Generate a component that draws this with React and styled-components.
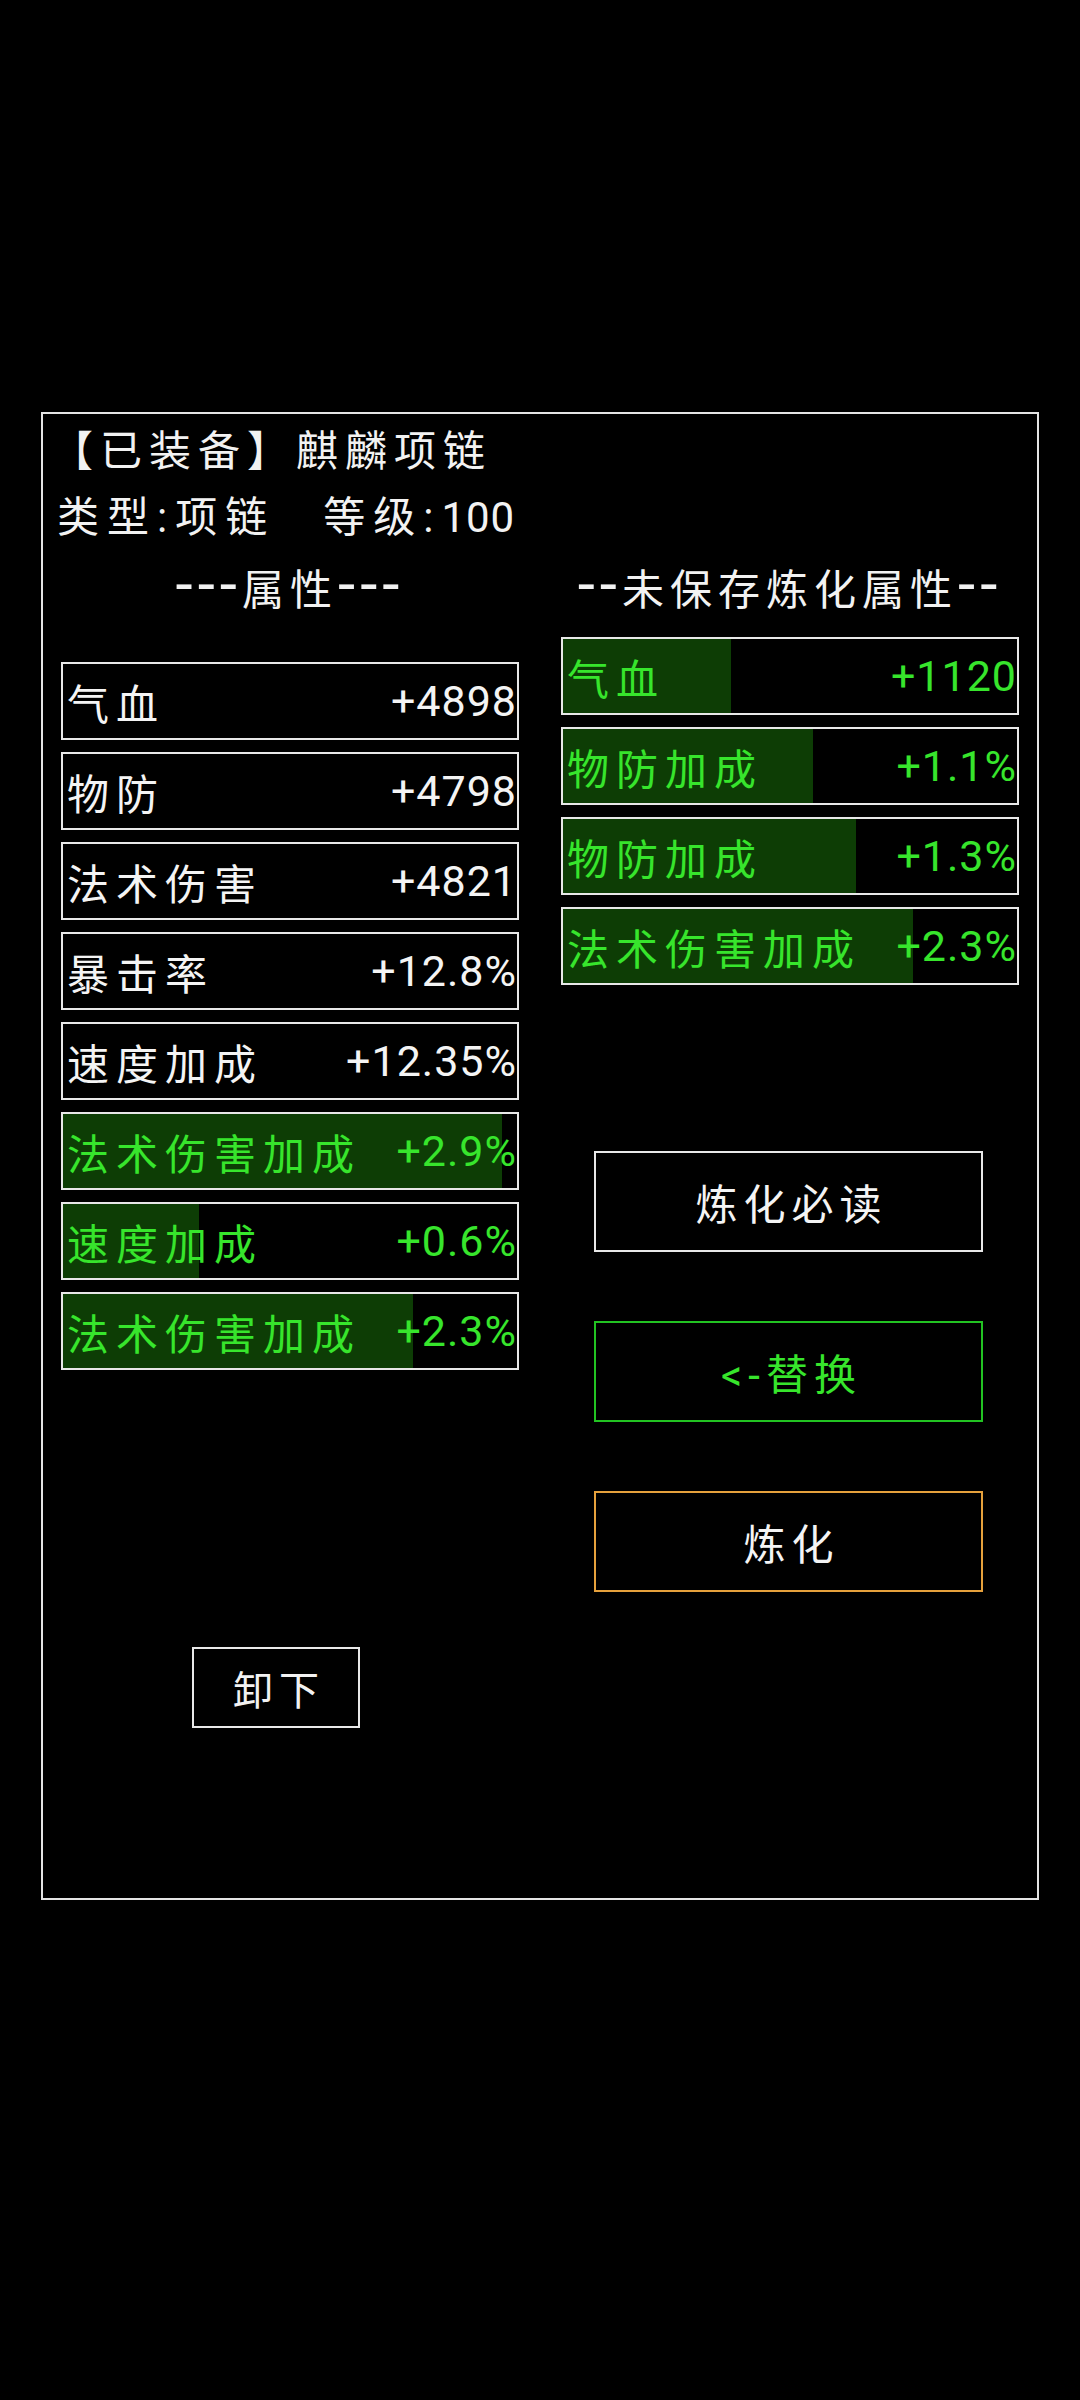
import React from "react";
import styled, { createGlobalStyle } from "styled-components";

const GlobalStyle = createGlobalStyle`
  html, body {
    margin: 0;
    padding: 0;
    background: #000;
  }
  body {
    min-height: 2400px;
    font-family: "Roboto", "Noto Sans CJK SC", sans-serif;
    color: #f2f2f2;
  }
`;

const GREEN = "#37e52c";
const FILL = "#0d3d05";

const equipped = [
  { name: "气血", value: "+4898" },
  { name: "物防", value: "+4798" },
  { name: "法术伤害", value: "+4821" },
  { name: "暴击率", value: "+12.8%" },
  { name: "速度加成", value: "+12.35%" },
  { name: "法术伤害加成", value: "+2.9%", fill: 96.8, green: true },
  { name: "速度加成", value: "+0.6%", fill: 30, green: true },
  { name: "法术伤害加成", value: "+2.3%", fill: 77, green: true }
];

const unsaved = [
  { name: "气血", value: "+1120", fill: 37, green: true },
  { name: "物防加成", value: "+1.1%", fill: 55, green: true },
  { name: "物防加成", value: "+1.3%", fill: 64.5, green: true },
  { name: "法术伤害加成", value: "+2.3%", fill: 77, green: true }
];

export default function App() {
  return (
    <>
      <GlobalStyle />
      <Page>
        <Panel>
          <Title>【已装备】麒麟项链</Title>
          <InfoLine>
            <span>类型:项链</span>
            <span>
              等级:<Num>100</Num>
            </span>
          </InfoLine>
          <Columns>
            <Column>
              <Header>
                <Dash>---</Dash>属性<Dash>---</Dash>
              </Header>
              <StatList $top={38}>
                {equipped.map((s, i) => (
                  <StatRow key={i} {...s} />
                ))}
              </StatList>
              <UnloadButton>卸下</UnloadButton>
            </Column>
            <Column>
              <Header>
                <Dash>--</Dash>未保存炼化属性<Dash>--</Dash>
              </Header>
              <StatList $top={13}>
                {unsaved.map((s, i) => (
                  <StatRow key={i} {...s} />
                ))}
              </StatList>
              <Actions>
                <ActionButton $border="#e8e8e8">炼化必读</ActionButton>
                <ActionButton $border="#22c322" $color={GREEN}>
                  &lt;-替换
                </ActionButton>
                <ActionButton $border="#e6a13c">炼化</ActionButton>
              </Actions>
            </Column>
          </Columns>
        </Panel>
      </Page>
    </>
  );
}

function StatRow({ name, value, fill = 0, green = false }) {
  return (
    <Row $fill={fill} $green={green}>
      <Label>{name}</Label>
      <Value>{value}</Value>
    </Row>
  );
}

const Page = styled.div`
  padding: 412px 0 0 41px;
`;

const Panel = styled.div`
  box-sizing: border-box;
  width: 998px;
  height: 1488px;
  border: 2px solid #e4e4e4;
  padding-top: 6px;
  display: flex;
  flex-direction: column;
`;

const Title = styled.div`
  height: 64px;
  line-height: 64px;
  font-size: 42px;
  letter-spacing: 7px;
  padding-left: 8px;
  white-space: nowrap;
`;

const InfoLine = styled.div`
  height: 68px;
  line-height: 68px;
  font-size: 42px;
  letter-spacing: 8px;
  padding-left: 14px;
  display: flex;
  gap: 48px;
  white-space: nowrap;
`;

const Num = styled.span`
  letter-spacing: 1px;
`;

const Columns = styled.div`
  display: grid;
  grid-template-columns: 458px 458px;
  column-gap: 42px;
  padding: 6px 17px 0 18px;
`;

const Column = styled.div`
  display: flex;
  flex-direction: column;
`;

const Header = styled.div`
  height: 66px;
  line-height: 66px;
  font-size: 42px;
  letter-spacing: 6px;
  text-align: center;
  white-space: nowrap;
`;

const Dash = styled.span`
  font-size: 62px;
  line-height: 0;
  letter-spacing: 5px;
`;

const StatList = styled.div`
  margin-top: ${(p) => p.$top}px;
  display: flex;
  flex-direction: column;
  gap: 12px;
`;

const Row = styled.div`
  box-sizing: border-box;
  height: 78px;
  border: 2px solid #e8e8e8;
  display: flex;
  align-items: center;
  justify-content: space-between;
  padding: 0 0 0 4px;
  color: ${(p) => (p.$green ? GREEN : "#f4f4f4")};
  background: ${(p) =>
    p.$fill
      ? `linear-gradient(to right, ${FILL} ${p.$fill}%, #000 ${p.$fill}%)`
      : "#000"};
  white-space: nowrap;
`;

const Label = styled.span`
  font-size: 42px;
  letter-spacing: 7px;
`;

const Value = styled.span`
  font-size: 43px;
  letter-spacing: 1px;
`;

const UnloadButton = styled.div`
  box-sizing: border-box;
  margin: 277px 0 0 131px;
  width: 168px;
  height: 81px;
  border: 2px solid #e8e8e8;
  display: flex;
  align-items: center;
  justify-content: center;
  font-size: 40px;
  letter-spacing: 6px;
  padding-left: 6px;
`;

const Actions = styled.div`
  margin: 166px 0 0 33px;
  display: flex;
  flex-direction: column;
  gap: 69px;
`;

const ActionButton = styled.div`
  box-sizing: border-box;
  width: 389px;
  height: 101px;
  border: 2px solid ${(p) => p.$border};
  color: ${(p) => p.$color || "#f4f4f4"};
  display: flex;
  align-items: center;
  justify-content: center;
  font-size: 42px;
  letter-spacing: 6px;
  padding-left: 6px;
`;
